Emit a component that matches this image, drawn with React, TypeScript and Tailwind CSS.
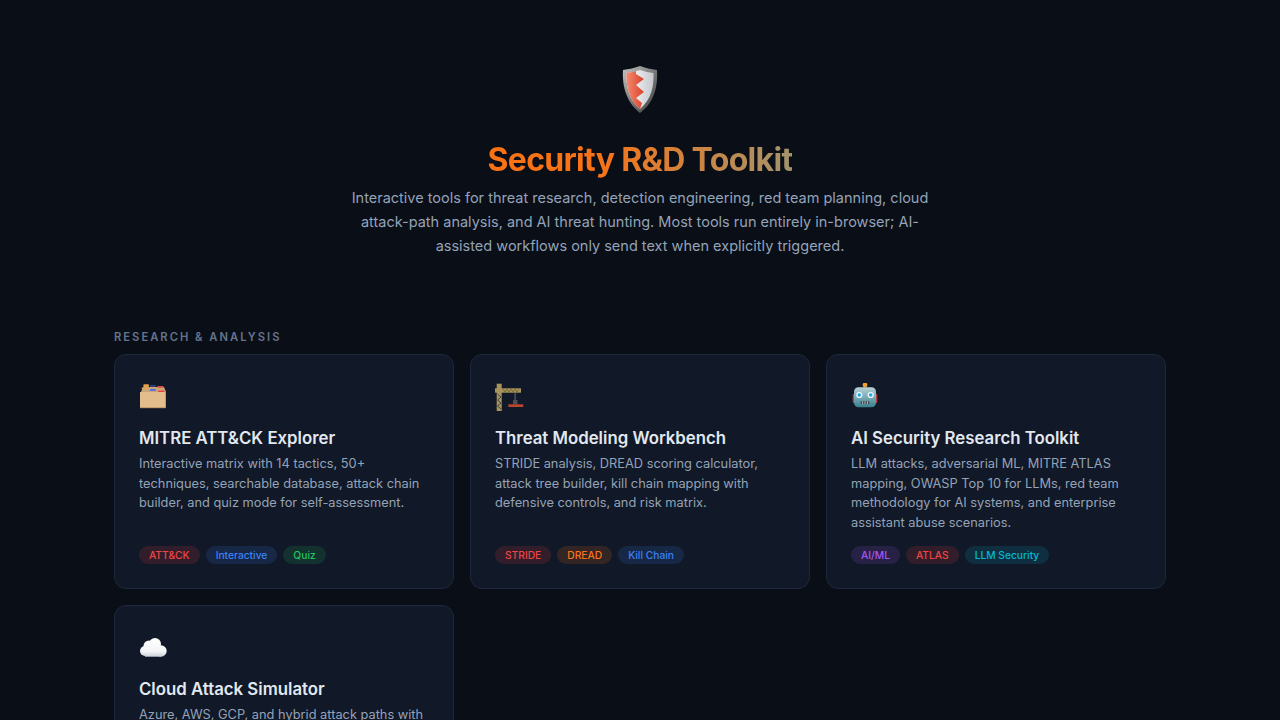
import React from 'react';

type Tone = 'red' | 'blue' | 'green' | 'orange' | 'purple' | 'cyan';

const TONES: Record<Tone, string> = {
    red: 'bg-[#ef4444]/15 text-[#ef4444]',
    blue: 'bg-[#3b82f6]/15 text-[#3b82f6]',
    green: 'bg-[#22c55e]/15 text-[#22c55e]',
    orange: 'bg-[#f97316]/15 text-[#f97316]',
    purple: 'bg-[#a855f7]/15 text-[#a855f7]',
    cyan: 'bg-[#06b6d4]/15 text-[#06b6d4]',
};

function ShieldIcon() {
    return (
        <svg width="36" height="50" viewBox="0 0 36 50" className="block">
            <defs>
                <linearGradient id="rim" x1="0" y1="0" x2="1" y2="1">
                    <stop offset="0" stopColor="#c4c4c4" />
                    <stop offset="0.55" stopColor="#747474" />
                    <stop offset="1" stopColor="#3a3a3a" />
                </linearGradient>
                <linearGradient id="face" x1="0" y1="0" x2="1" y2="0">
                    <stop offset="0" stopColor="#ffffff" />
                    <stop offset="1" stopColor="#c4c8cc" />
                </linearGradient>
                <linearGradient id="redside" x1="0" y1="0" x2="1" y2="0">
                    <stop offset="0" stopColor="#f58a70" />
                    <stop offset="1" stopColor="#d9402a" />
                </linearGradient>
            </defs>
            <path d="M18 1 C23 3 29 4 35 5 C36 20 33 37 18 48 C4 37 0 20 1 5 C7 4 13 3 18 1 Z" fill="url(#rim)" />
            <path d="M18 5 C23 6.5 27 7.5 31.5 8 C32 20 30 34 18 44 C6 34 4 20 4.5 8 C9 7.5 13 6.5 18 5 Z" fill="url(#face)" />
            <path d="M14 6 C11 7 8 7.5 4.5 8 C4 20 6 34 18 44 L20 38 L14 33 L22 27 L14 20 L22 14 L14 9 Z" fill="url(#redside)" />
        </svg>
    );
}

function BoxIcon() {
    return (
        <svg width="28" height="26" viewBox="0 0 28 26" className="block">
            <path d="M2 8 L4 3 L25 3 L27 8 Z" fill="#c9a67a" />
            <rect x="4.3" y="0.3" width="5.7" height="2.6" rx="1" fill="#e9a04a" />
            <rect x="2.7" y="3.7" width="7.3" height="1.4" fill="#e9a04a" />
            <rect x="11" y="1.2" width="5.7" height="1.4" fill="#3d4f9e" />
            <rect x="11" y="5" width="5.7" height="1.8" fill="#5268e0" />
            <rect x="18.3" y="2" width="6" height="1.8" fill="#e84a44" />
            <rect x="19.3" y="6.6" width="6" height="1.8" fill="#ee3a38" />
            <rect x="1" y="8" width="25.8" height="16" fill="#e3bd8b" />
            <rect x="1" y="23.4" width="25.8" height="0.8" fill="#a98a63" />
        </svg>
    );
}

function CraneIcon() {
    return (
        <svg width="30" height="30" viewBox="0 0 30 30" className="block">
            <rect x="1.7" y="1.7" width="5" height="27.3" fill="#a8945a" />
            <path d="M2.5 12 L6 15 L2.5 18 L6 21 L2.5 24 L6 27" stroke="#3f4048" strokeWidth="1" fill="none" />
            <rect x="0" y="6.3" width="26" height="4.4" fill="#a8945a" />
            <path d="M8 7 L10 10 L12 7 L14 10 L16 7 L18 10 L20 7 L22 10 L24 7" stroke="#6f6238" strokeWidth="0.8" fill="none" />
            <rect x="19.6" y="10" width="1" height="10" fill="#6a6e73" />
            <rect x="18" y="18" width="4.5" height="4.5" fill="#4b4f54" />
            <rect x="13.3" y="22.3" width="15" height="2.7" fill="#b8452c" />
        </svg>
    );
}

function RobotIcon() {
    return (
        <svg width="28" height="28" viewBox="0 0 28 28" className="block">
            <defs>
                <linearGradient id="head" x1="0" y1="0" x2="0" y2="1">
                    <stop offset="0" stopColor="#b9d3d8" />
                    <stop offset="1" stopColor="#37808e" />
                </linearGradient>
            </defs>
            <circle cx="14" cy="2" r="2.4" fill="#f0a22e" />
            <rect x="1.7" y="11" width="2" height="9" rx="1" fill="#b5423f" />
            <rect x="24.3" y="11" width="2" height="9" rx="1" fill="#b5423f" />
            <rect x="3" y="4.3" width="22" height="20" rx="4.5" fill="url(#head)" />
            <circle cx="8.3" cy="12" r="3.1" fill="#e9f7fb" />
            <circle cx="8.3" cy="12" r="1.8" fill="#27a4e6" />
            <circle cx="19.7" cy="12" r="3.1" fill="#e9f7fb" />
            <circle cx="19.7" cy="12" r="1.8" fill="#27a4e6" />
            <rect x="9.7" y="18.3" width="8.6" height="2.7" rx="1" fill="#3a3f46" />
            <path d="M11.6 18.3 V21 M14 18.3 V21 M16.4 18.3 V21" stroke="#c9ced2" strokeWidth="0.9" />
        </svg>
    );
}

function CloudIcon() {
    return (
        <svg width="28" height="20" viewBox="0 0 28 20" className="block">
            <defs>
                <linearGradient id="puff" gradientUnits="userSpaceOnUse" x1="0" y1="0" x2="0" y2="19">
                    <stop offset="0" stopColor="#ffffff" />
                    <stop offset="0.7" stopColor="#f4f5f7" />
                    <stop offset="1" stopColor="#c9ced6" />
                </linearGradient>
            </defs>
            <g fill="url(#puff)">
                <circle cx="16" cy="6" r="6" />
                <circle cx="10" cy="8" r="5.5" />
                <circle cx="6" cy="13" r="5" />
                <circle cx="22" cy="13" r="5.7" />
                <rect x="6" y="9" width="16" height="9.7" />
            </g>
        </svg>
    );
}

const CARDS: { icon: React.ReactNode; title: string; desc: string; tags: [string, Tone][] }[] = [
    {
        icon: <BoxIcon />,
        title: 'MITRE ATT&CK Explorer',
        desc: 'Interactive matrix with 14 tactics, 50+ techniques, searchable database, attack chain builder, and quiz mode for self-assessment.',
        tags: [['ATT&CK', 'red'], ['Interactive', 'blue'], ['Quiz', 'green']],
    },
    {
        icon: <CraneIcon />,
        title: 'Threat Modeling Workbench',
        desc: 'STRIDE analysis, DREAD scoring calculator, attack tree builder, kill chain mapping with defensive controls, and risk matrix.',
        tags: [['STRIDE', 'red'], ['DREAD', 'orange'], ['Kill Chain', 'blue']],
    },
    {
        icon: <RobotIcon />,
        title: 'AI Security Research Toolkit',
        desc: 'LLM attacks, adversarial ML, MITRE ATLAS mapping, OWASP Top 10 for LLMs, red team methodology for AI systems, and enterprise assistant abuse scenarios.',
        tags: [['AI/ML', 'purple'], ['ATLAS', 'red'], ['LLM Security', 'cyan']],
    },
    {
        icon: <CloudIcon />,
        title: 'Cloud Attack Simulator',
        desc: 'Azure, AWS, GCP, and hybrid attack paths with',
        tags: [],
    },
];

export default function App() {
    return (
        <div className="h-[720px] overflow-hidden bg-[#0a0e17] font-['Inter',sans-serif]">
            <header className="pt-[64px] pb-[71px] flex flex-col items-center text-center">
                <div className="h-[52px] mb-[20px] flex items-center justify-center"><ShieldIcon /></div>
                <h1 className="text-[32px] leading-[48px] font-bold tracking-[-0.022em] bg-[linear-gradient(90deg,#f97316_0%,#f97316_35%,#a3946c_100%)] bg-clip-text text-transparent">Security R&amp;D Toolkit</h1>
                <p className="mt-[2px] w-[580px] text-[14.5px] leading-[24px] text-[#94a3b8]">
                    Interactive tools for threat research, detection engineering, red team planning, cloud attack-path analysis, and AI threat hunting. Most tools run entirely in-browser; AI-assisted workflows only send text when explicitly triggered.
                </p>
            </header>
            <section className="w-[1052px] mx-auto">
                <h2 className="text-[11.2px] leading-[17px] font-semibold tracking-[0.18em] uppercase text-[#64748b] mb-[8px]">Research &amp; Analysis</h2>
                <div className="grid grid-cols-3 gap-[16px]">
                    {CARDS.map((card) => (
                        <div key={card.title} className="flex flex-col bg-[#111827] border border-[#1e293b] rounded-[12px] p-[24px]">
                            <div className="h-[36px] mb-[11px] flex items-center">{card.icon}</div>
                            <h3 className="text-[16.8px] leading-[25px] font-semibold text-[#e2e8f0] mb-[3px]">{card.title}</h3>
                            <p className="text-[12.8px] leading-[19.6px] text-[#94a3b8]">{card.desc}</p>
                            {card.tags.length > 0 && (
                                <div className="flex gap-[6px] mt-auto pt-[13.6px]">
                                    {card.tags.map(([label, tone]) => (
                                        <span key={label} className={`text-[10.24px] leading-[16px] font-medium px-[10px] pt-[1.5px] pb-[0.5px] rounded-full ${TONES[tone]}`}>{label}</span>
                                    ))}
                                </div>
                            )}
                        </div>
                    ))}
                </div>
            </section>
        </div>
    );
}
